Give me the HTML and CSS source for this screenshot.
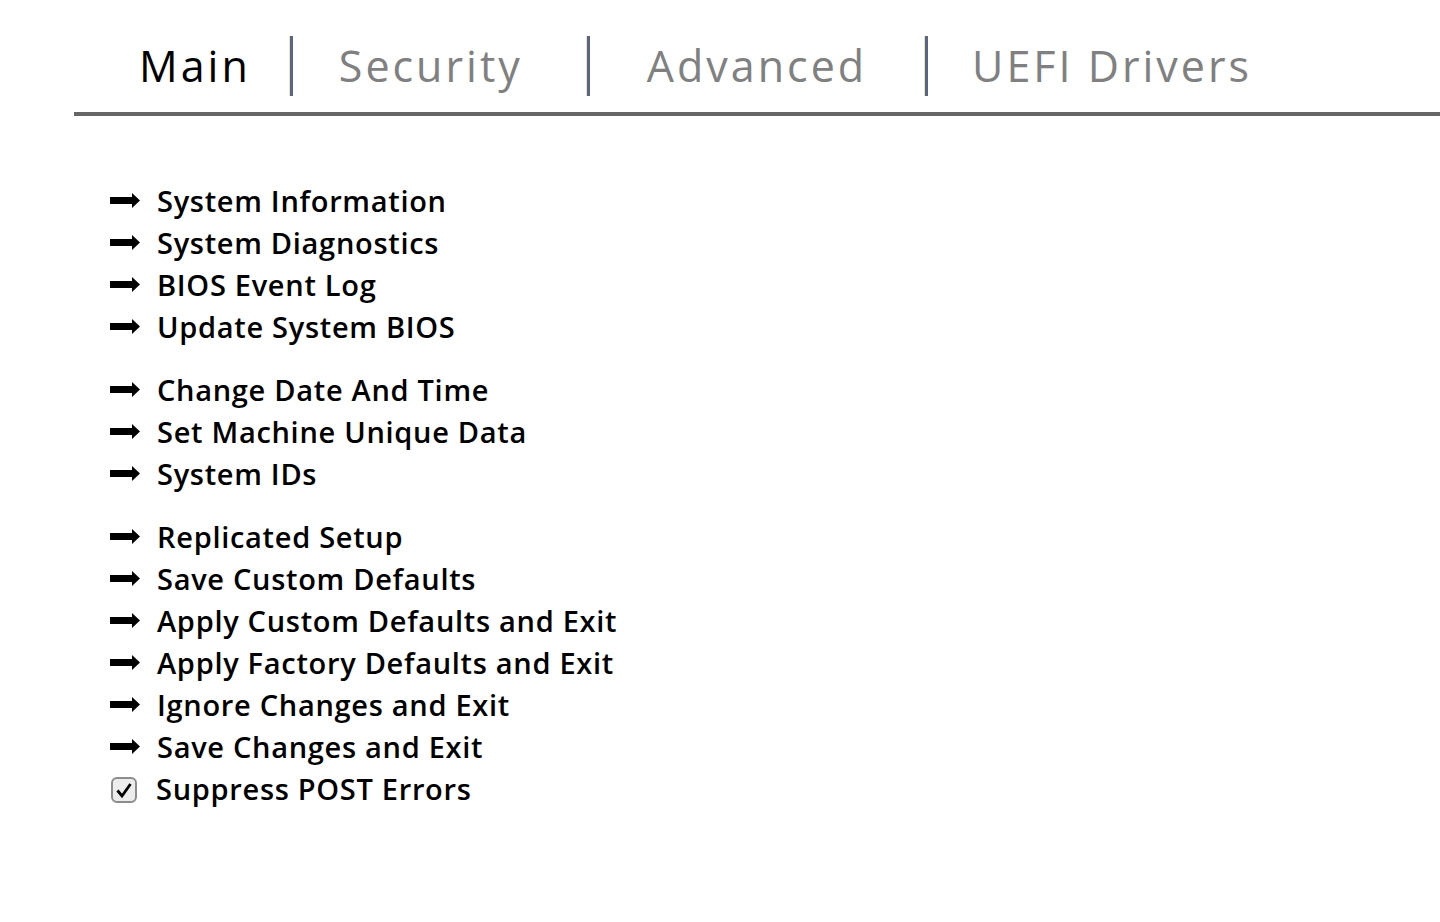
FILE: index.html
```html
<!DOCTYPE html>
<html lang="en">
<head>
    <meta charset="UTF-8">
    <title>BIOS Setup - Main</title>
    <link rel="stylesheet" href="styles.css">
</head>
<body>
    <div class="tabs">
        <span class="tab active">Main</span>
        <span class="sep sep-1"></span>
        <span class="tab">Security</span>
        <span class="sep sep-2"></span>
        <span class="tab">Advanced</span>
        <span class="sep sep-3"></span>
        <span class="tab">UEFI Drivers</span>
    </div>

    <div class="menu">
        <div class="group">
            <div class="item"><svg class="arrow" viewBox="0 0 30 15"><path d="M0 4h22V0l8 7.5-8 7.5v-4H0z"/></svg>System Information</div>
            <div class="item"><svg class="arrow" viewBox="0 0 30 15"><path d="M0 4h22V0l8 7.5-8 7.5v-4H0z"/></svg>System Diagnostics</div>
            <div class="item"><svg class="arrow" viewBox="0 0 30 15"><path d="M0 4h22V0l8 7.5-8 7.5v-4H0z"/></svg>BIOS Event Log</div>
            <div class="item"><svg class="arrow" viewBox="0 0 30 15"><path d="M0 4h22V0l8 7.5-8 7.5v-4H0z"/></svg>Update System BIOS</div>
        </div>
        <div class="group">
            <div class="item"><svg class="arrow" viewBox="0 0 30 15"><path d="M0 4h22V0l8 7.5-8 7.5v-4H0z"/></svg>Change Date And Time</div>
            <div class="item"><svg class="arrow" viewBox="0 0 30 15"><path d="M0 4h22V0l8 7.5-8 7.5v-4H0z"/></svg>Set Machine Unique Data</div>
            <div class="item"><svg class="arrow" viewBox="0 0 30 15"><path d="M0 4h22V0l8 7.5-8 7.5v-4H0z"/></svg>System IDs</div>
        </div>
        <div class="group">
            <div class="item"><svg class="arrow" viewBox="0 0 30 15"><path d="M0 4h22V0l8 7.5-8 7.5v-4H0z"/></svg>Replicated Setup</div>
            <div class="item"><svg class="arrow" viewBox="0 0 30 15"><path d="M0 4h22V0l8 7.5-8 7.5v-4H0z"/></svg>Save Custom Defaults</div>
            <div class="item"><svg class="arrow" viewBox="0 0 30 15"><path d="M0 4h22V0l8 7.5-8 7.5v-4H0z"/></svg>Apply Custom Defaults and Exit</div>
            <div class="item"><svg class="arrow" viewBox="0 0 30 15"><path d="M0 4h22V0l8 7.5-8 7.5v-4H0z"/></svg>Apply Factory Defaults and Exit</div>
            <div class="item"><svg class="arrow" viewBox="0 0 30 15"><path d="M0 4h22V0l8 7.5-8 7.5v-4H0z"/></svg>Ignore Changes and Exit</div>
            <div class="item"><svg class="arrow" viewBox="0 0 30 15"><path d="M0 4h22V0l8 7.5-8 7.5v-4H0z"/></svg>Save Changes and Exit</div>
            <div class="item">
                <svg class="check" viewBox="0 0 26 26"><rect x="1" y="1" width="24" height="24" rx="5" fill="#ececec" stroke="#8c8c8c" stroke-width="2"/><path d="M6.5 13.5l4.5 5.5 8.5-12" fill="none" stroke="#000" stroke-width="2.8"/></svg>Suppress POST Errors
            </div>
        </div>
    </div>
</body>
</html>
```

FILE: styles.css
```css
body {
    margin: 0;
    background-color: #fff;
    font-family: "Open Sans", "Noto Sans", sans-serif;
}
.tabs {
    display: flex;
    align-items: center;
    margin-left: 74px;
    padding-left: 65px;
    padding-top: 20px;
    height: 116px;
    box-sizing: border-box;
    border-bottom: 4px solid #666;
}
.tab {
    font-size: 43px;
    letter-spacing: 3px;
    color: #808080;
    line-height: 60px;
}
.tab.active {
    color: #000;
}
.sep {
    width: 3px;
    height: 60px;
    background-color: #5a6486;
    border-left: 1px solid #f1e2b8;
}
.sep-1 { margin: 0 46px 0 38px; }
.sep-2 { margin: 0 57px 0 63px; }
.sep-3 { margin: 0 44px 0 57px; }
.menu {
    padding: 63px 0 0 110px;
}
.group {
    margin-bottom: 21px;
}
.item {
    display: flex;
    align-items: center;
    height: 42px;
    font-size: 29px;
    font-weight: 600;
    letter-spacing: 0.7px;
    color: #000;
}
.arrow {
    width: 30px;
    height: 15px;
    margin-right: 17px;
}
.check {
    width: 26px;
    height: 26px;
    margin: 4px 19px 0 1px;
}
```
